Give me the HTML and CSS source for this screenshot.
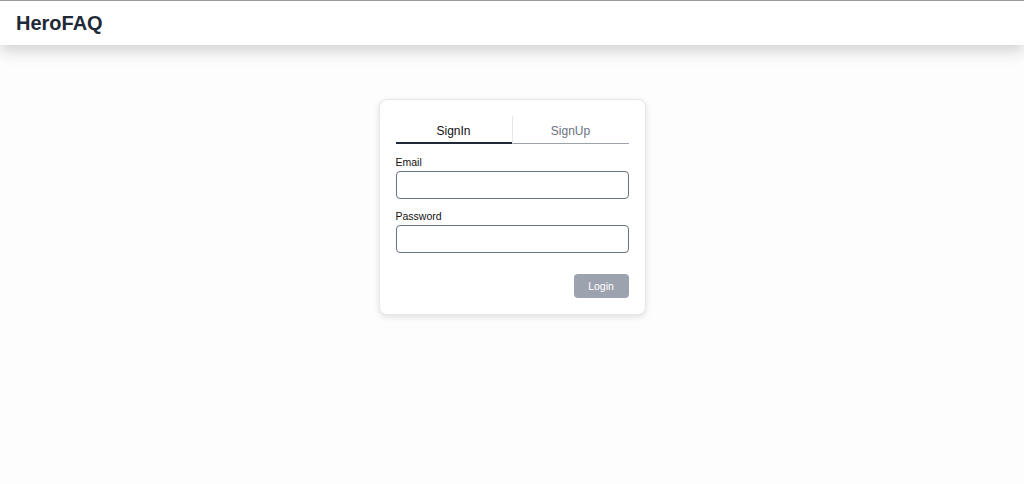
FILE: index.html
```html
<!DOCTYPE html>
<html>
<head>
<meta charset="utf-8">
<link rel="stylesheet" href="styles.css">
</head>
<body>
<header class="topbar">
  <h1 class="brand">HeroFAQ</h1>
</header>
<main class="page">
  <div class="card">
    <div class="tabs">
      <div class="tab active">SignIn</div>
      <div class="tab">SignUp</div>
    </div>
    <form class="form">
      <label class="field">
        <span class="label">Email</span>
        <input class="input" type="email">
      </label>
      <label class="field">
        <span class="label">Password</span>
        <input class="input" type="password">
      </label>
      <div class="actions">
        <button type="button" class="btn">Login</button>
      </div>
    </form>
  </div>
</main>
</body>
</html>
```
FILE: styles.css
```css
* { box-sizing: border-box; }
html, body { margin: 0; padding: 0; }
body {
  font-family: "Liberation Sans", Arial, sans-serif;
  background: #fdfdfd;
  border-top: 1px solid #9a9a9a;
  height: 484px;
  overflow: hidden;
}
.topbar {
  height: 44px;
  background: #fff;
  display: flex;
  align-items: center;
  padding: 0 16px;
  box-shadow: 0 6px 12px rgba(0,0,0,0.12), 0 12px 18px rgba(0,0,0,0.04);
  position: relative;
}
.brand {
  margin: 0;
  font-size: 20px;
  font-weight: 700;
  color: #1f2937;
}
.page {
  display: flex;
  justify-content: center;
  padding-top: 54px;
}
.card {
  width: 267px;
  background: #fff;
  border: 1px solid #e5e7eb;
  border-radius: 8px;
  box-shadow: 0 2px 6px rgba(0,0,0,0.12);
  padding: 16px 16px 16px;
}
.tabs {
  display: flex;
}
.tab {
  flex: 1;
  text-align: center;
  font-size: 12px;
  color: #6b7280;
  height: 28px;
  padding-top: 8px;
  border-bottom: 1px solid #9ca3af;
}
.tab + .tab { border-left: 1px solid #e5e7eb; }
.tab.active {
  color: #111;
  border-bottom: 2px solid #1f2937;
}
.form {
  display: flex;
  flex-direction: column;
  padding-top: 12px;
}
.field {
  display: flex;
  flex-direction: column;
  margin-bottom: 11px;
}
.label {
  font-size: 10.5px;
  color: #111;
  margin-bottom: 3px;
}
.input {
  height: 28px;
  border: 1px solid #6b7280;
  border-radius: 4px;
  background: #fff;
  outline: none;
}
.actions {
  display: flex;
  justify-content: flex-end;
  padding-top: 10px;
}
.btn {
  width: 55px;
  height: 24px;
  border: none;
  border-radius: 4px;
  background: #9ca3af;
  color: #fff;
  font-family: inherit;
  font-size: 10.5px;
}
```
